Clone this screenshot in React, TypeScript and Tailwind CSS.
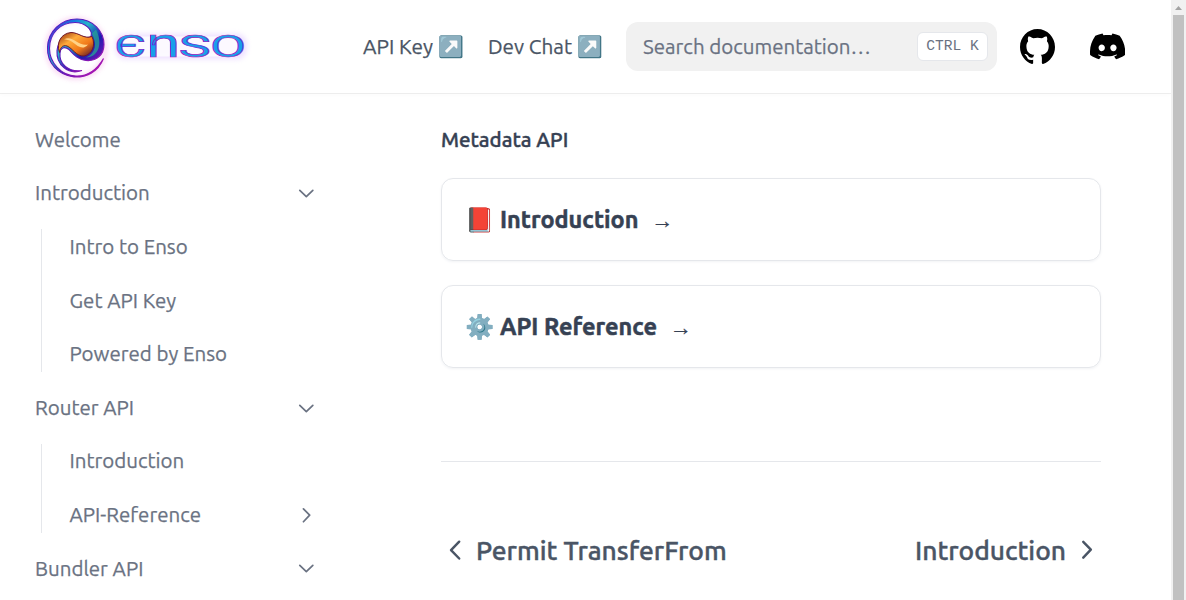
import React from "react";

type Dir = "down" | "right" | "left";

function Chevron({ dir, size, stroke = 1.8 }: { dir: Dir; size: number; stroke?: number }) {
  const d = dir === "down" ? "M5 8.700l6.800 6.500 6.800-6.500" : dir === "right" ? "M8.800 5l6.500 6.700-6.500 6.800" : "M15.600 4.900l-7 7.200 7 7.200";
  return (
    <svg width={size} height={size} viewBox="0 0 24 24" fill="none" stroke="currentColor" strokeWidth={stroke} strokeLinecap="round" strokeLinejoin="round" className="shrink-0">
      <path d={d} />
    </svg>
  );
}

function Logo() {
  return (
    <svg width="220" height="80" viewBox="36 6.5 220 80" className="shrink-0" aria-label="ENSO">
      <defs>
        <linearGradient id="ring" x1="0" y1="0" x2="1" y2="1">
          <stop offset="0" stopColor="#6a18c8" />
          <stop offset="0.25" stopColor="#1479e0" />
          <stop offset="0.4" stopColor="#25b8c8" />
          <stop offset="0.62" stopColor="#1c1bb0" />
          <stop offset="1" stopColor="#c014b8" />
        </linearGradient>
        <linearGradient id="edge" x1="0" y1="0" x2="1" y2="1">
          <stop offset="0" stopColor="#5a20c8" />
          <stop offset="0.5" stopColor="#5a18b8" />
          <stop offset="1" stopColor="#c014b0" />
        </linearGradient>
        <linearGradient id="fire" x1="0" y1="0" x2="1" y2="1">
          <stop offset="0" stopColor="#8c2508" />
          <stop offset="0.35" stopColor="#ffab3a" />
          <stop offset="0.65" stopColor="#f07818" />
          <stop offset="1" stopColor="#4a1030" />
        </linearGradient>
        <linearGradient id="word" x1="0" y1="0" x2="0" y2="1">
          <stop offset="0.2" stopColor="#c01c98" />
          <stop offset="0.55" stopColor="#5a30d8" />
          <stop offset="0.85" stopColor="#c01cb0" />
        </linearGradient>
        <filter id="glow" x="-20%" y="-30%" width="140%" height="160%">
          <feGaussianBlur stdDeviation="2.5" />
        </filter>
      </defs>
      <circle cx="76" cy="48" r="29" fill="none" stroke="#f09adf" strokeWidth="4" opacity=".45" filter="url(#glow)" />
      <path d="M103.500 58C98 72 86 77 74 76.500C58 74 47 63 47.500 47C48 31 61 18.500 77 18.500C93 18.500 104 31 104 44C104 54 97 61 86 60C77 59 73 53 69 49C64 45 60 48 60 53C59 63 68 72 82 70C68 75 56 64 57 50C58 41 64 33 72 32.500C79 33 85 40 91 36C93 29 85 22 75 22C60 22 49.500 33 49.500 48C49.500 62 61 75 76 75.500C88 76 97 69 103.500 58Z" fill="url(#ring)" stroke="url(#edge)" strokeWidth="1.1" />
      <path d="M59.500 52C56 42 61 33 71 32C79 32 84 39 92 36C96 45 92 54 84 55.500C76 56 73 48 67 45.500C62 44 60 48 59.500 52Z" fill="url(#fire)" stroke="#711928" strokeWidth="1" />
      <path d="M64 39C72 34 78 46 88 44C83 50 78 46 73 42C69 39 66 39 64 39Z" fill="#ffd287" />
      <path d="M92 33C97 43 96 53 86 57C99 57 103 42 96 29Z" fill="#25a595" opacity=".75" />
      <rect x="115" y="33" width="132" height="26" rx="10" fill="#d9b8ff" opacity=".4" filter="url(#glow)" />
      <rect x="118" y="36" width="125" height="20" rx="10" fill="#ffffff" opacity=".8" />
      <text transform="translate(113.500 56.500) scale(1.36 1)" fontFamily="Roboto, 'Liberation Sans', sans-serif" fontWeight="400" fontSize="31" fill="#18a0ea" stroke="url(#word)" strokeWidth="0.7">
        <tspan x="0.5" textLength="24" lengthAdjust="spacingAndGlyphs">Є</tspan>
        <tspan x="24" fontSize="41" textLength="25" lengthAdjust="spacingAndGlyphs">n</tspan>
        <tspan x="48" textLength="23.500" lengthAdjust="spacingAndGlyphs">S</tspan>
        <tspan x="71" textLength="26.500" lengthAdjust="spacingAndGlyphs">O</tspan>
      </text>
    </svg>
  );
}

function GitHubMark() {
  return (
    <svg width="35" height="35" viewBox="3 3 18 18" fill="#000" className="shrink-0">
      <path d="M12 3C7.0275 3 3 7.12937 3 12.2276C3 16.3109 5.57625 19.7597 9.15374 20.9824C9.60374 21.0631 9.77249 20.7863 9.77249 20.5441C9.77249 20.3249 9.76125 19.5982 9.76125 18.8254C7.5 19.2522 6.915 18.2602 6.735 17.7412C6.63375 17.4759 6.19499 16.6569 5.8125 16.4378C5.4975 16.2647 5.0475 15.838 5.80124 15.8264C6.51 15.8149 7.01625 16.4954 7.18499 16.7723C7.99499 18.1679 9.28875 17.7758 9.80625 17.5335C9.885 16.9337 10.1212 16.53 10.38 16.2993C8.3775 16.0687 6.285 15.2728 6.285 11.7432C6.285 10.7397 6.63375 9.9092 7.20749 9.26326C7.1175 9.03257 6.8025 8.08674 7.2975 6.81794C7.2975 6.81794 8.05125 6.57571 9.77249 7.76377C10.4925 7.55615 11.2575 7.45234 12.0225 7.45234C12.7875 7.45234 13.5525 7.55615 14.2725 7.76377C15.9937 6.56418 16.7475 6.81794 16.7475 6.81794C17.2424 8.08674 16.9275 9.03257 16.8375 9.26326C17.4113 9.9092 17.76 10.7281 17.76 11.7432C17.76 15.2843 15.6563 16.0687 13.6537 16.2993C13.98 16.5877 14.2613 17.1414 14.2613 18.0065C14.2613 19.2407 14.25 20.2326 14.25 20.5441C14.25 20.7863 14.4188 21.0746 14.8688 20.9824C18.4237 19.7597 21 16.2993 21 12.2276C21 7.12937 16.9725 3 12 3Z" />
    </svg>
  );
}

function DiscordMark() {
  return (
    <svg width="35" height="35" viewBox="0 5 30.670 30.670" fill="#000" className="shrink-0">
      <path transform="translate(0 9)" d="M26.0015 1.9529C24.0021 1.03051 21.8787 0.366 19.6623 0C19.3904 0.461 19.0724 1.082 18.8531 1.576C16.5008 1.236 14.1578 1.236 11.8366 1.576C11.6166 1.082 11.2914 0.461 11.0170 0C8.7982 0.366 6.6723 1.032 4.6729 1.957C0.6599 7.706-0.4264 13.312 0.1170 18.839C2.7885 20.700 5.3779 21.831 7.9237 22.571C8.5520 21.762 9.1129 20.902 9.5953 19.996C8.6766 19.662 7.7965 19.250 6.9656 18.771C7.1860 18.616 7.4021 18.454 7.6104 18.287C12.6867 20.500 18.2025 20.500 23.2184 18.287C23.4295 18.454 23.6450 18.616 23.8632 18.771C23.0295 19.251 22.1477 19.664 21.2291 19.998C21.7110 20.902 22.2699 21.764 22.8996 22.573C25.4476 21.833 28.0391 20.701 30.7106 18.839C31.3475 12.431 29.6209 6.877 26.0015 1.9529ZM10.2870 15.439C8.7632 15.439 7.5135 14.097 7.5135 12.463C7.5135 10.829 8.7365 9.485 10.2870 9.485C11.8374 9.485 13.0871 10.827 13.0604 12.463C13.0628 14.097 11.8374 15.439 10.2870 15.439ZM20.5366 15.439C19.0127 15.439 17.7631 14.097 17.7631 12.463C17.7631 10.829 18.9861 9.485 20.5366 9.485C22.0870 9.485 23.3367 10.827 23.3100 12.463C23.3100 14.097 22.0870 15.439 20.5366 15.439Z" />
    </svg>
  );
}

function Item({ label, dir }: { label: string; dir?: Dir }) {
  return (
    <div className="flex h-[53.62px] items-center justify-between">
      <span>{label}</span>
      {dir && <Chevron dir={dir} size={23} />}
    </div>
  );
}

function Group({ children }: { children: React.ReactNode }) {
  return (
    <div className="flex pl-1.5">
      <div className="my-[9px] w-px bg-gray-200" />
      <div className="flex-1 pl-[27.5px]">{children}</div>
    </div>
  );
}

function Card({ emoji, label }: { emoji: string; label: string }) {
  return (
    <div className="flex h-[83px] items-center rounded-xl border border-gray-200 px-[23.4px] text-[23.5px] font-bold text-gray-700 shadow-sm shadow-gray-100">
      <span className="whitespace-pre [-webkit-text-stroke:0.5px]">{emoji} {label}</span>
      <span className="ml-[13px] mt-[2px] font-['Liberation_Sans'] text-[22px] font-normal">→</span>
    </div>
  );
}

export default function App() {
  return (
    <div className="flex h-[600px] w-[1186px] overflow-hidden bg-white font-['Ubuntu','Noto_Sans',sans-serif] text-[20.5px] text-gray-500 [-webkit-text-stroke:0.25px]">
      <div className="flex min-w-0 flex-1 flex-col">
        <header className="flex h-[93px] shrink-0 items-center pl-9 shadow-[0_1px_0_rgba(0,0,0,0.06),0_2px_4px_rgba(0,0,0,0.02)]">
          <Logo />
          <a className="ml-[107px] flex w-[125px] items-center whitespace-nowrap text-[20.8px] text-gray-600">API Key ↗️</a>
          <a className="flex w-[138px] items-center whitespace-nowrap text-[20.7px] text-gray-600">Dev Chat ↗️</a>
          <div className="flex h-[49px] w-[371px] items-center justify-between rounded-xl bg-[#f1f1f1] pl-[17px] pr-[9px]">
            <span className="pt-px">Search documentation…</span>
            <kbd className="flex h-[29px] w-[71px] items-center justify-center rounded-md border border-gray-200 bg-white font-['Liberation_Mono',monospace] text-[14.6px] [-webkit-text-stroke:0px]">CTRL K</kbd>
          </div>
          <div className="ml-[23px] flex items-center gap-[35px] text-black">
            <GitHubMark />
            <DiscordMark />
          </div>
        </header>
        <div className="flex min-h-0 flex-1">
          <nav className="w-[317.500px] shrink-0 pl-[35px] pt-[20.25px]">
            <Item label="Welcome" />
            <Item label="Introduction" dir="down" />
            <Group>
              <Item label="Intro to Enso" />
              <Item label="Get API Key" />
              <Item label="Powered by Enso" />
            </Group>
            <Item label="Router API" dir="down" />
            <Group>
              <Item label="Introduction" />
              <Item label="API-Reference" dir="right" />
            </Group>
            <Item label="Bundler API" dir="down" />
          </nav>
          <main className="ml-[123.5px] w-[660px] pt-[32px]">
            <h1 className="h-[29px] font-medium leading-[29px] text-gray-700 [-webkit-text-stroke:0.4px]">Metadata API</h1>
            <div className="mt-[24px] flex flex-col gap-6">
              <Card emoji="📕" label="Introduction" />
              <Card emoji="⚙️" label="API Reference" />
            </div>
            <div className="mt-[93px] flex items-center justify-between border-t border-gray-200 pt-[68px] text-[26.4px] font-medium leading-[40px] text-gray-600 [-webkit-text-stroke:0.4px]">
              <a className="flex items-center gap-[7px]"><Chevron dir="left" size={28} stroke={2.1} />Permit TransferFrom</a>
              <a className="flex items-center gap-[7px]">Introduction<Chevron dir="right" size={28} stroke={2.1} /></a>
            </div>
          </main>
        </div>
      </div>
      <div className="flex w-[15px] shrink-0 flex-col items-center bg-[#f1f1f1]">
        <svg width="15" height="15" viewBox="0 0 15 15"><path d="M4 10l3.500-4 3.500 4z" fill="#a3a3a3" /></svg>
        <div className="w-[11px] flex-1 bg-[#c1c1c1]" />
      </div>
    </div>
  );
}
